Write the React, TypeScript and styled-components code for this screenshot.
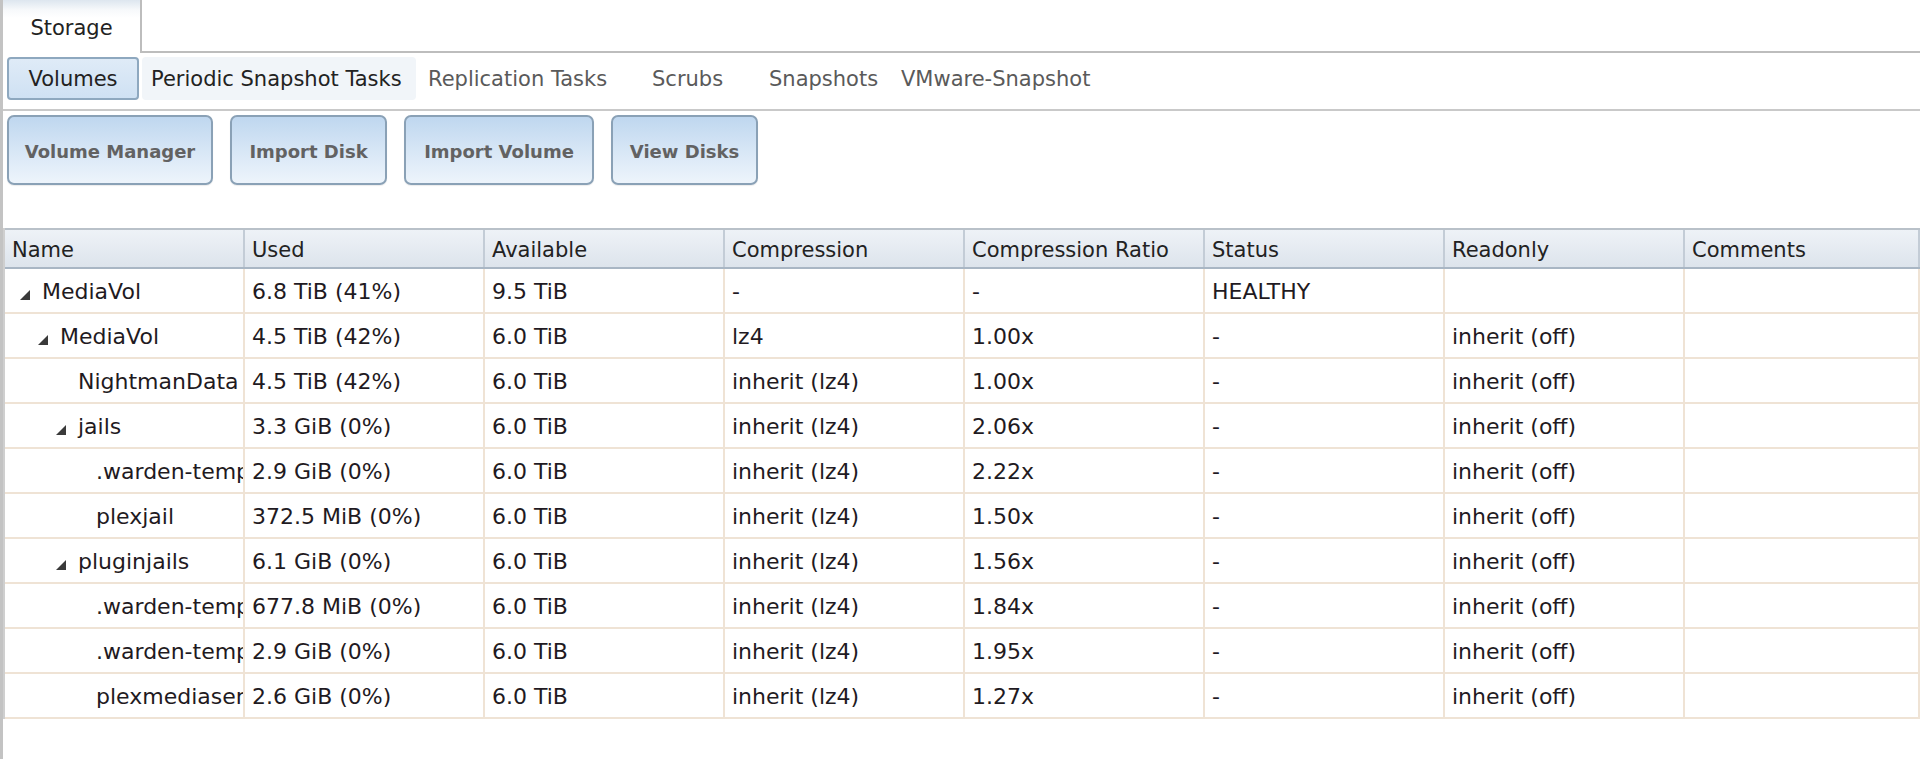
import React from 'react';
import styled, { createGlobalStyle } from 'styled-components';

const GlobalStyle = createGlobalStyle`
  html, body {
    margin: 0;
    padding: 0;
    background: #fff;
  }
  body {
    font-family: "DejaVu Sans", Verdana, sans-serif;
    color: #222;
  }
`;

const Page = styled.div`
  min-height: 759px;
  border-left: 3px solid #c3c3c3;
  box-sizing: border-box;
`;

const TabBar = styled.div`
  display: flex;
  height: 51px;
  border-bottom: 2px solid #bdbdbd;
`;

const Tab = styled.div`
  width: 139px;
  height: 53px;
  display: flex;
  align-items: center;
  justify-content: center;
  padding-top: 2px;
  box-sizing: border-box;
  font-size: 21px;
  color: #222;
  background: linear-gradient(#dde6ef 0, #f7f9fb 10px, #fff 18px);
  border-right: 2px solid #bdbdbd;
`;

const SubNav = styled.div`
  display: flex;
  gap: 3px;
  padding: 4px 4px 9px;
  border-bottom: 2px solid #c9c9c9;
`;

const NavItem = styled.div<{ $w: number; $active?: boolean; $hover?: boolean }>`
  width: ${(p) => p.$w}px;
  height: 43px;
  box-sizing: border-box;
  display: flex;
  align-items: center;
  justify-content: ${(p) => (p.$active ? 'center' : 'flex-start')};
  padding-left: ${(p) => (p.$active ? 0 : 7)}px;
  font-size: 21px;
  white-space: nowrap;
  color: ${(p) => (p.$active || p.$hover ? '#222' : '#5a5a5a')};
  border-radius: 4px;
  border: 2px solid ${(p) => (p.$active ? '#8ea8bf' : 'transparent')};
  background: ${(p) =>
    p.$active
      ? 'linear-gradient(#dfebf7, #cfe1f3)'
      : p.$hover
      ? '#f1f5f9'
      : 'transparent'};
`;

const ButtonRow = styled.div`
  display: flex;
  gap: 17px;
  padding: 4px 4px 0;
`;

const ActionButton = styled.div<{ $w: number }>`
  width: ${(p) => p.$w}px;
  height: 70px;
  box-sizing: border-box;
  padding-top: 2px;
  display: flex;
  align-items: center;
  justify-content: center;
  border: 2px solid #8aa1b6;
  border-radius: 7px;
  background: linear-gradient(#bfd7ef, #e0ecf8 70%, #edf4fb);
  box-shadow: 0 1px 1px rgba(0, 0, 0, 0.08);
  font-size: 18px;
  font-weight: bold;
  color: #626262;
  white-space: nowrap;
`;

const Grid = styled.div`
  margin-top: 43px;
  border-left: 2px solid #cfcfcf;
`;

const HeaderRow = styled.div`
  display: grid;
  grid-template-columns: repeat(7, 240px) 1fr;
  height: 41px;
  box-sizing: border-box;
  border-top: 2px solid #b9c1c9;
  border-bottom: 2px solid #a9b6c4;
  background: linear-gradient(#eef2f7, #dde4ec);
`;

const HeadCell = styled.div`
  display: flex;
  align-items: center;
  padding: 2px 0 0 7px;
  font-size: 21px;
  color: #222;
  border-right: 2px solid #c3ccd6;
  white-space: nowrap;
  overflow: hidden;
`;

const Row = styled.div`
  display: grid;
  grid-template-columns: repeat(7, 240px) 1fr;
  height: 45px;
  box-sizing: border-box;
  border-bottom: 2px solid #efe3d5;
`;

const Cell = styled.div`
  display: flex;
  align-items: center;
  padding: 2px 0 0 7px;
  font-size: 22px;
  color: #1f1a22;
  border-right: 2px solid #efe3d5;
  white-space: nowrap;
  overflow: hidden;
`;

const NameCell = styled(Cell)<{ $level: number }>`
  padding-left: ${(p) => 15 + p.$level * 18}px;
`;

const Expander = styled.span`
  width: 22px;
  flex-shrink: 0;
  display: flex;
  align-items: center;
  padding-top: 6px;
`;

type Vol = {
  name: string;
  level: number;
  open?: boolean;
  used: string;
  avail: string;
  comp: string;
  ratio: string;
  status: string;
  ro: string;
};

const cols = ['Name', 'Used', 'Available', 'Compression', 'Compression Ratio', 'Status', 'Readonly', 'Comments'];

const vols: Vol[] = [
  { name: 'MediaVol', level: 0, open: true, used: '6.8 TiB (41%)', avail: '9.5 TiB', comp: '-', ratio: '-', status: 'HEALTHY', ro: '' },
  { name: 'MediaVol', level: 1, open: true, used: '4.5 TiB (42%)', avail: '6.0 TiB', comp: 'lz4', ratio: '1.00x', status: '-', ro: 'inherit (off)' },
  { name: 'NightmanData', level: 2, used: '4.5 TiB (42%)', avail: '6.0 TiB', comp: 'inherit (lz4)', ratio: '1.00x', status: '-', ro: 'inherit (off)' },
  { name: 'jails', level: 2, open: true, used: '3.3 GiB (0%)', avail: '6.0 TiB', comp: 'inherit (lz4)', ratio: '2.06x', status: '-', ro: 'inherit (off)' },
  { name: '.warden-template-pluginjail', level: 3, used: '2.9 GiB (0%)', avail: '6.0 TiB', comp: 'inherit (lz4)', ratio: '2.22x', status: '-', ro: 'inherit (off)' },
  { name: 'plexjail', level: 3, used: '372.5 MiB (0%)', avail: '6.0 TiB', comp: 'inherit (lz4)', ratio: '1.50x', status: '-', ro: 'inherit (off)' },
  { name: 'pluginjails', level: 2, open: true, used: '6.1 GiB (0%)', avail: '6.0 TiB', comp: 'inherit (lz4)', ratio: '1.56x', status: '-', ro: 'inherit (off)' },
  { name: '.warden-template-pluginjail-10.3-x64', level: 3, used: '677.8 MiB (0%)', avail: '6.0 TiB', comp: 'inherit (lz4)', ratio: '1.84x', status: '-', ro: 'inherit (off)' },
  { name: '.warden-template-standard-10.3-x64', level: 3, used: '2.9 GiB (0%)', avail: '6.0 TiB', comp: 'inherit (lz4)', ratio: '1.95x', status: '-', ro: 'inherit (off)' },
  { name: 'plexmediaserver_1', level: 3, used: '2.6 GiB (0%)', avail: '6.0 TiB', comp: 'inherit (lz4)', ratio: '1.27x', status: '-', ro: 'inherit (off)' },
];

const navItems = [
  { label: 'Volumes', w: 132, active: true },
  { label: 'Periodic Snapshot Tasks', w: 274, hover: true },
  { label: 'Replication Tasks', w: 221 },
  { label: 'Scrubs', w: 114 },
  { label: 'Snapshots', w: 129 },
  { label: 'VMware-Snapshot', w: 210 },
];

const buttons = [
  { label: 'Volume Manager', w: 206 },
  { label: 'Import Disk', w: 157 },
  { label: 'Import Volume', w: 190 },
  { label: 'View Disks', w: 147 },
];

const Triangle = () => (
  <svg width="10" height="10" viewBox="0 0 10 10">
    <polygon points="10,0 10,10 0,10" fill="#3a3a3a" />
  </svg>
);

const App = () => {
  return (
    <Page>
      <GlobalStyle />
      <TabBar>
        <Tab>Storage</Tab>
      </TabBar>
      <SubNav>
        {navItems.map((n) => (
          <NavItem key={n.label} $w={n.w} $active={n.active} $hover={n.hover}>
            {n.label}
          </NavItem>
        ))}
      </SubNav>
      <ButtonRow>
        {buttons.map((b) => (
          <ActionButton key={b.label} $w={b.w}>
            {b.label}
          </ActionButton>
        ))}
      </ButtonRow>
      <Grid>
        <HeaderRow>
          {cols.map((c) => (
            <HeadCell key={c}>{c}</HeadCell>
          ))}
        </HeaderRow>
        {vols.map((v, i) => (
          <Row key={i}>
            <NameCell $level={v.level}>
              <Expander>{v.open && <Triangle />}</Expander>
              {v.name}
            </NameCell>
            <Cell>{v.used}</Cell>
            <Cell>{v.avail}</Cell>
            <Cell>{v.comp}</Cell>
            <Cell>{v.ratio}</Cell>
            <Cell>{v.status}</Cell>
            <Cell>{v.ro}</Cell>
            <Cell />
          </Row>
        ))}
      </Grid>
    </Page>
  );
};

export default App;
